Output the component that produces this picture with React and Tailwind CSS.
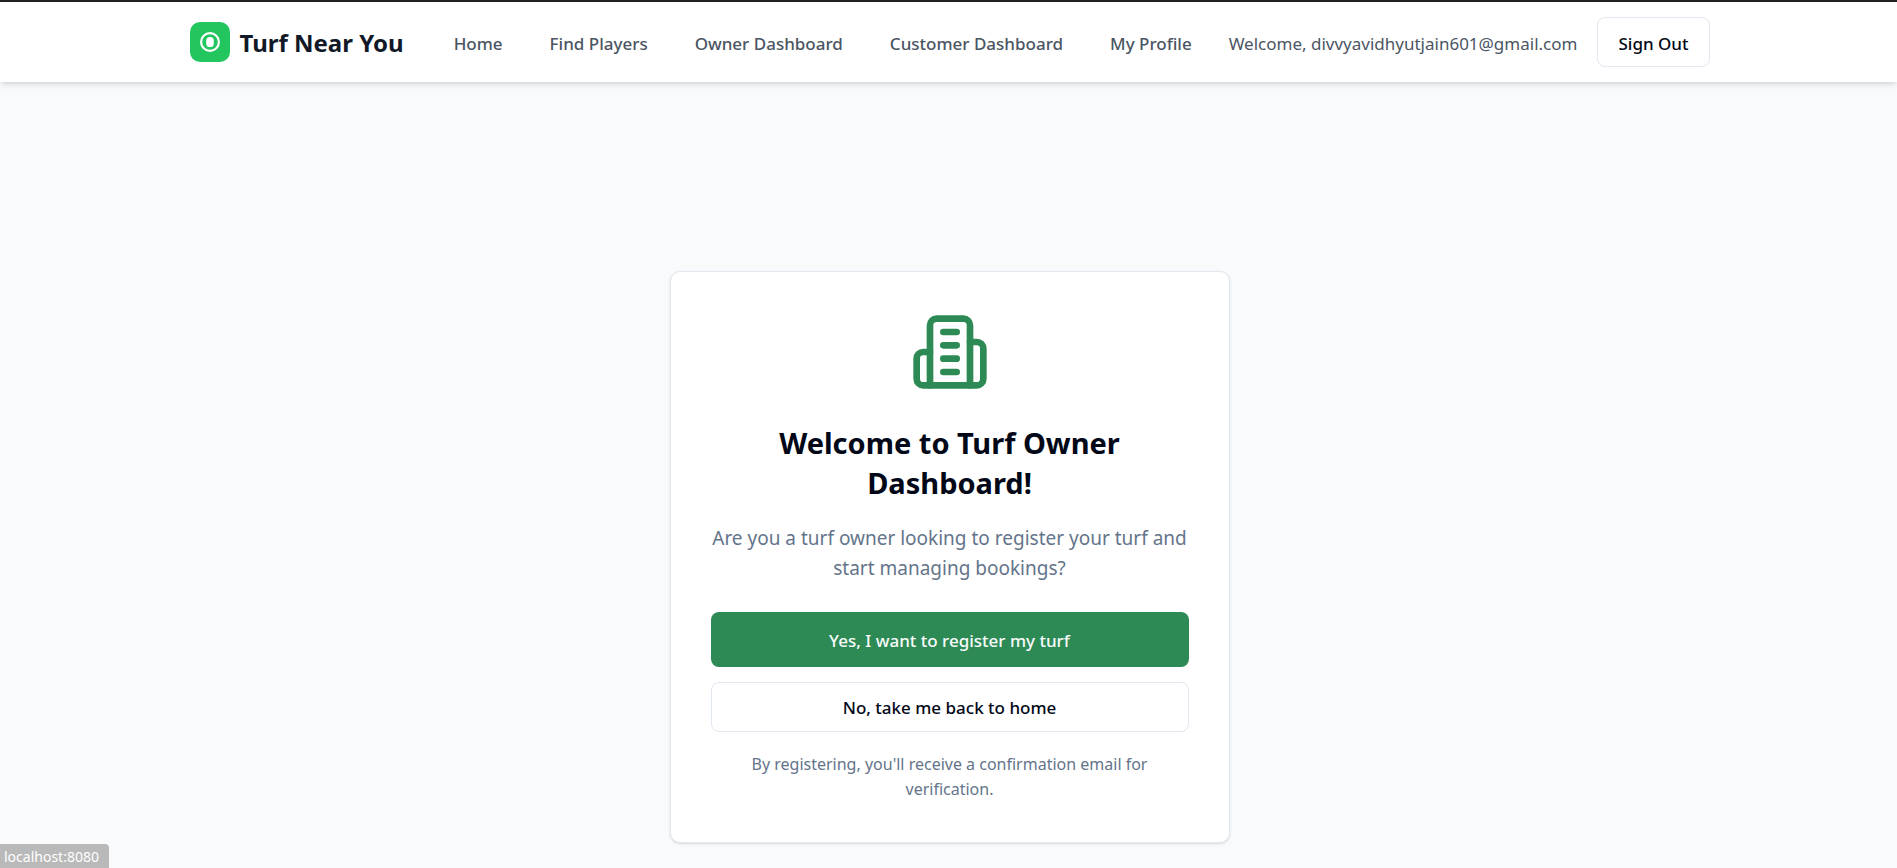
import React from "react";

const links = ["Home", "Find Players", "Owner Dashboard", "Customer Dashboard", "My Profile"];

function Logo() {
  return (
    <a href="#home" className="flex items-center gap-[10px]">
      <span className="flex size-10 items-center justify-center rounded-[10px] bg-[#22c55e]">
        <svg viewBox="0 0 20 20" className="size-5" aria-hidden="true">
          <circle cx="10" cy="10" r="8.9" fill="none" stroke="white" strokeWidth="2.2" />
          <rect x="6.2" y="5" width="7.6" height="10" rx="3.6" fill="white" />
        </svg>
      </span>
      <span className="pt-[2px] text-2xl font-bold whitespace-nowrap text-[#111827]">Turf Near You</span>
    </a>
  );
}

function BuildingIcon() {
  return (
    <svg
      viewBox="0 0 24 24"
      fill="none"
      stroke="currentColor"
      strokeWidth="2"
      strokeLinecap="round"
      strokeLinejoin="round"
      className="mx-auto size-20 text-[#2d8a54]"
      aria-hidden="true"
    >
      <path d="M6 22V4a2 2 0 0 1 2-2h8a2 2 0 0 1 2 2v18Z" />
      <path d="M6 12H4a2 2 0 0 0-2 2v6a2 2 0 0 0 2 2h2" />
      <path d="M18 9h2a2 2 0 0 1 2 2v9a2 2 0 0 1-2 2h-2" />
      <path d="M10 6h4" />
      <path d="M10 10h4" />
      <path d="M10 14h4" />
      <path d="M10 18h4" />
    </svg>
  );
}

export default function App() {
  return (
    <div className="flex min-h-screen flex-col bg-[#f9fafb] font-['Noto_Sans','Open_Sans',sans-serif] text-[#020817]">
      <header className="border-t-2 border-[#242122] bg-white shadow-md">
        <div className="mx-auto flex h-20 max-w-[1600px] items-center pr-[39px] pl-[41px]">
          <Logo />
          <nav className="ml-[50px] flex items-center gap-[47px] pt-[3px] text-[17px] font-medium text-[#4b5563]">
            {links.map((label) => (
              <a key={label} href="#" className="whitespace-nowrap">
                {label}
              </a>
            ))}
          </nav>
          <div className="ml-auto flex items-center gap-5 text-[17px]">
            <span className="pt-[3px] text-[#4b5563]">Welcome, divvyavidhyutjain601@gmail.com</span>
            <button className="h-[50px] rounded-lg border border-[#e2e8f0] bg-white px-5 pt-[3px] font-medium whitespace-nowrap">
              Sign Out
            </button>
          </div>
        </div>
      </header>

      <main className="flex flex-1 items-start justify-center pt-[189px] pr-5 pb-6 pl-[22px]">
        <section className="w-full max-w-[560px] rounded-[10px] border border-[#e2e8f0] bg-white p-10 text-center shadow-sm">
          <BuildingIcon />
          <h1 className="mt-[31px] text-[29px] leading-10 font-bold">Welcome to Turf Owner Dashboard!</h1>
          <p className="mt-5 text-[19px] leading-[30px] text-[#64748b]">
            Are you a turf owner looking to register your turf and start managing bookings?
          </p>
          <div className="mt-[29px] flex flex-col gap-[15px] text-[17px] font-medium">
            <button className="h-[55px] rounded-lg bg-[#2d8a54] pt-[2px] text-[#f8fafc]">Yes, I want to register my turf</button>
            <button className="h-[50px] rounded-lg border border-[#e2e8f0] bg-white pt-[2px]">No, take me back to home</button>
          </div>
          <p className="mt-5 text-base leading-[25px] text-[#64748b]">
            By registering, you'll receive a confirmation email for verification.
          </p>
        </section>
      </main>

      <div className="fixed bottom-0 left-0 h-6 rounded-tr-[4px] bg-[#b9b9b9] pr-[10px] pl-1 text-sm leading-[26px] text-white">
        localhost:8080
      </div>
    </div>
  );
}
